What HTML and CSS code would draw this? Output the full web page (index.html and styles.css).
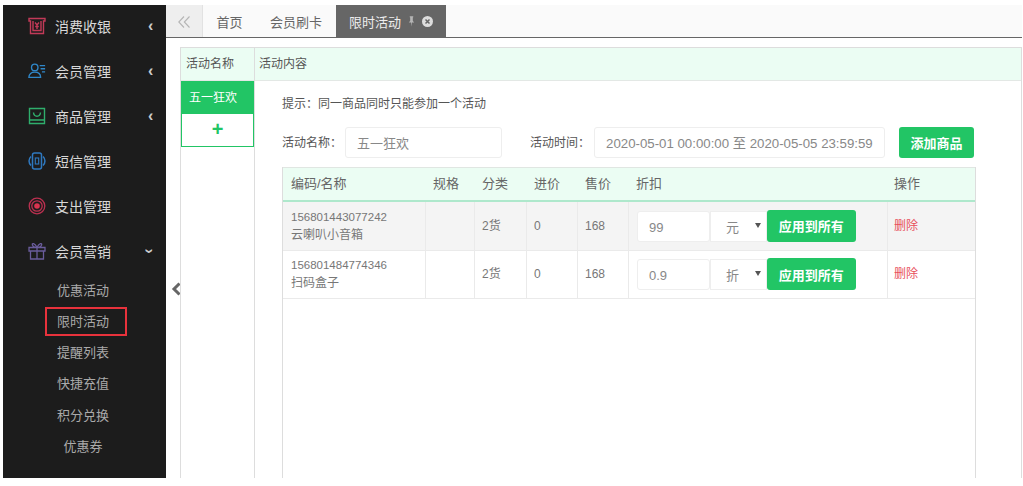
FILE: index.html
```html
<!DOCTYPE html>
<html lang="en">
<head>
  <meta charset="UTF-8" />
  <title>限时活动</title>
  <link rel="stylesheet" href="styles.css">
</head>
<body>
  <div class="app">
    <aside class="sidebar">
      <ul class="menu">
        <li class="menu-item">
          <svg class="icon" viewBox="0 0 18 18" fill="none" stroke="#c23a58" stroke-width="1.4"><path d="M1 1.500h16v2.500h-1.500v12.500h-13V4H1z"/><path d="M5 4v9.500h8V4"/><path d="M7 5.500l2 2.500 2-2.500M9 8v4M7.200 9.500h3.600"/></svg>
          <span class="menu-label">消费收银</span>
          <span class="caret">‹</span>
        </li>
        <li class="menu-item">
          <svg class="icon" viewBox="0 0 20 18" fill="none" stroke="#2f87c9" stroke-width="1.500"><circle cx="7.500" cy="5" r="3.600"/><path d="M1 16c0-3.800 2.800-5.800 6.500-5.800S14 12.200 14 16zM13 3h6M14 6.500h5M15.500 10h3.500"/></svg>
          <span class="menu-label">会员管理</span>
          <span class="caret">‹</span>
        </li>
        <li class="menu-item">
          <svg class="icon" viewBox="0 0 18 18" fill="none" stroke="#2fae6c" stroke-width="1.400"><path d="M1.500 1.500h15v15h-15zM1.500 13h15M5.500 5.500c.5 5 6.500 5 7 0"/></svg>
          <span class="menu-label">商品管理</span>
          <span class="caret">‹</span>
        </li>
        <li class="menu-item">
          <svg class="icon" viewBox="0 0 18 18" fill="none" stroke="#2f79c0" stroke-width="1.500"><rect x="4.500" y="1" width="9" height="16" rx="2"/><rect x="7.300" y="6" width="3.400" height="6" stroke-width="1.100"/><path d="M3 4.500c-2.600 2.500-2.600 6.500 0 9M15 4.500c2.600 2.500 2.600 6.500 0 9"/></svg>
          <span class="menu-label">短信管理</span>
        </li>
        <li class="menu-item">
          <svg class="icon" viewBox="0 0 18 18" fill="none" stroke="#bb3050" stroke-width="1.300"><circle cx="9" cy="9" r="7.800"/><circle cx="9" cy="9" r="5.200"/><circle cx="9" cy="9" r="2.800" fill="#d8344f" stroke="none"/></svg>
          <span class="menu-label">支出管理</span>
        </li>
        <li class="menu-item">
          <svg class="icon" viewBox="0 0 18 18" fill="none" stroke="#6a5c9c" stroke-width="1.300"><path d="M1 5.500h16v3.500H1zM2.500 9v8h13V9M9 5.500V17M9 5.500C7 1 3.500 .5 4.500 3.200 5 5 7 5.500 9 5.500c2 0 4-.5 4.500-2.300C14.500 .5 11 1 9 5.500z"/></svg>
          <span class="menu-label">会员营销</span>
          <span class="caret caret-open">‹</span>
        </li>
      </ul>
      <ul class="submenu">
        <li>优惠活动</li>
        <li class="is-marked">限时活动</li>
        <li>提醒列表</li>
        <li>快捷充值</li>
        <li>积分兑换</li>
        <li>优惠券</li>
      </ul>
    </aside>

    <div class="collapse-strip">
      <svg class="collapse-arrow" viewBox="0 0 10 14" fill="none" stroke="#666" stroke-width="3"><path d="M8.500 1.500L3 7l5.500 5.500"/></svg>
    </div>

    <main class="main">
      <nav class="tabs">
        <span class="tab-back">
          <svg class="back-icon" viewBox="0 0 12 12" fill="none" stroke="#b5b5b5" stroke-width="1.100"><path d="M6 .5L.8 6 6 11.500M11.500 .5L6.300 6l5.200 5.500"/></svg>
        </span>
        <span class="tab">首页</span>
        <span class="tab">会员刷卡</span>
        <span class="tab tab-active">限时活动
          <svg class="pin" viewBox="0 0 8 12" fill="#b5b5b5"><path d="M2 0h4v1l-.5.500V5L7 7H4.500L4 12l-.5-5H1l1.500-2V1.500L2 1z"/></svg>
          <svg class="tab-close" viewBox="0 0 11 11"><circle cx="5.500" cy="5.500" r="5.500" fill="#ddd"/><path d="M3.500 3.500l4 4M7.500 3.500l-4 4" stroke="#666" stroke-width="1.500"/></svg>
        </span>
      </nav>

      <div class="panel">
        <div class="activity-col">
          <div class="col-head">活动名称</div>
          <div class="activity-current">五一狂欢</div>
          <div class="activity-add">+</div>
        </div>
        <div class="content-col">
          <div class="col-head">活动内容</div>
          <div class="content-body">
            <p class="hint">提示：同一商品同时只能参加一个活动</p>
            <div class="form-row">
              <label class="form-label">活动名称：</label>
              <div class="input input-name">五一狂欢</div>
              <label class="form-label form-label-time">活动时间：</label>
              <div class="input input-time">2020-05-01 00:00:00 至 2020-05-05 23:59:59</div>
              <button class="btn btn-add">添加商品</button>
            </div>
            <div class="goods-wrap">
              <table class="goods">
                <thead>
                  <tr>
                    <th class="c-code">编码/名称</th>
                    <th class="c-spec">规格</th>
                    <th class="c-type">分类</th>
                    <th class="c-cost">进价</th>
                    <th class="c-price">售价</th>
                    <th class="c-discount">折扣</th>
                    <th>操作</th>
                  </tr>
                </thead>
                <tbody>
                  <tr class="row-grey">
                    <td><span class="code">156801443077242</span><br>云喇叭小音箱</td>
                    <td></td>
                    <td>2货</td>
                    <td>0</td>
                    <td>168</td>
                    <td class="discount-cell">
                      <div class="discount">
                        <div class="input input-num">99</div>
                        <div class="input input-unit">元<span class="arrow"></span></div>
                        <button class="btn btn-apply">应用到所有</button>
                      </div>
                    </td>
                    <td class="del">删除</td>
                  </tr>
                  <tr>
                    <td><span class="code">156801484774346</span><br>扫码盒子</td>
                    <td></td>
                    <td>2货</td>
                    <td>0</td>
                    <td>168</td>
                    <td class="discount-cell">
                      <div class="discount">
                        <div class="input input-num">0.9</div>
                        <div class="input input-unit">折<span class="arrow"></span></div>
                        <button class="btn btn-apply">应用到所有</button>
                      </div>
                    </td>
                    <td class="del">删除</td>
                  </tr>
                </tbody>
              </table>
            </div>
          </div>
        </div>
      </div>
    </main>
  </div>
</body>
</html>
```

FILE: styles.css
```css
* {
  box-sizing: border-box;
}

html, body {
  margin: 0;
  height: 100%;
  overflow: hidden;
  background-color: #fff;
}

body {
  padding: 5px 1px 8px 3px;
  font-family: "Liberation Sans", "Noto Sans CJK SC", sans-serif;
  font-size: 12px;
  color: #666;
}

.app {
  display: flex;
  height: 100%;
}

/* sidebar */
.sidebar {
  width: 163px;
  flex: none;
  background-color: #1c1c1c;
  color: #ccc;
}

.menu, .submenu {
  list-style: none;
  margin: 0;
  padding: 0;
}

.menu-item {
  display: flex;
  align-items: center;
  height: 45px;
  padding: 0 0 4px 25px;
  font-size: 14px;
}

.icon {
  width: 18px;
  height: 18px;
  flex: none;
}

.menu-label {
  margin-left: 9px;
  width: 93px;
  color: #d8d8d8;
}

.caret {
  font-size: 16px;
  line-height: 1;
  color: #ccc;
  font-weight: bold;
}

.caret-open {
  margin-left: -3px;
  transform: rotate(-90deg);
}

.submenu li {
  height: 31.2px;
  line-height: 31px;
  width: 160px;
  text-align: center;
  font-size: 13px;
  color: #aaa;
}

.submenu li.is-marked {
  width: 82px;
  height: 29px;
  line-height: 25px;
  margin: 1px 0 1px 42px;
  padding-left: 10px;
  border: 2px solid #e8323c;
  text-align: left;
}

/* the thin strip with the collapse arrow */
.collapse-strip {
  width: 14px;
  flex: none;
  display: flex;
  align-items: center;
  justify-content: center;
  padding: 94px 0 0 6px;
}

.collapse-arrow {
  width: 10px;
  height: 14px;
  flex: none;
}

.main {
  flex: 1;
  margin-left: -14px;
  display: flex;
  flex-direction: column;
  min-width: 0;
}

/* tabs */
.tabs {
  display: flex;
  height: 33px;
  flex: none;
  background-color: #fafafa;
  border-bottom: 1px solid #666;
  align-items: stretch;
  font-size: 13px;
  margin-bottom: 9px;
}

.tab-back {
  width: 37px;
  display: flex;
  align-items: center;
  justify-content: center;
  background-color: #eee;
  border-right: 1px solid #e2e2e2;
}

.back-icon {
  width: 12px;
  height: 12px;
  margin-top: 2px;
}

.tab {
  display: flex;
  align-items: center;
  padding: 0 14px 0 13.5px;
  color: #666;
}

.tab-active {
  background-color: #666;
  color: #eee;
  padding: 0 13px;
  gap: 7px;
}

.pin {
  width: 7px;
  height: 11px;
}

.tab-close {
  width: 11px;
  height: 11px;
}

/* panel */
.panel {
  flex: 1;
  display: flex;
  margin-left: 14px;
  border: 1px solid #ddd;
  border-bottom: 0;
  min-height: 0;
}

.col-head {
  height: 33px;
  line-height: 33px;
  padding-left: 5px;
  background-color: #ebfdf3;
  border-bottom: 1px solid #e3e8e5;
  color: #555;
  font-size: 12px;
}

.activity-col {
  width: 74px;
  flex: none;
  border-right: 1px solid #ddd;
}

.activity-current {
  height: 33px;
  line-height: 34px;
  padding-left: 8px;
  background-color: #22c565;
  color: #fff;
  font-size: 12px;
}

.activity-add {
  height: 33px;
  line-height: 30px;
  border: 1px solid #22c565;
  border-top: 0;
  color: #22c565;
  text-align: center;
  font-size: 20px;
  font-weight: bold;
}

.content-col {
  flex: 1;
  min-width: 0;
  display: flex;
  flex-direction: column;
}

.content-col .col-head {
  padding-left: 4px;
}

.content-body {
  flex: 1;
  display: flex;
  flex-direction: column;
  padding: 0 46px 0 27px;
}

.hint {
  margin: 0;
  height: 46px;
  line-height: 47px;
  flex: none;
  color: #555;
}

.form-row {
  display: flex;
  align-items: center;
  flex: none;
  height: 31px;
  margin-bottom: 9px;
}

.form-label {
  margin-bottom: 3px;
  color: #555;
  white-space: nowrap;
}

.form-label-time {
  margin-left: 28px;
  margin-right: 4px;
}

.input {
  height: 31px;
  line-height: 31px;
  background-color: #fff;
  border: 1px solid #eee;
  border-radius: 3px;
  color: #888;
  font-size: 13px;
}

.input-name {
  width: 157px;
  margin-left: 3px;
  padding-left: 11px;
}

.input-time {
  width: 291px;
  padding-left: 11px;
  white-space: nowrap;
  font-size: 13.25px;
}

.btn {
  border: 0;
  background-color: #22c565;
  color: #fff;
  border-radius: 3px;
  font-family: inherit;
  font-size: 13px;
  font-weight: bold;
  padding: 0;
}

.btn-add {
  width: 75px;
  height: 31px;
  margin-left: 14px;
}

/* goods table */
.goods-wrap {
  flex: 1;
  width: 694px;
  border-left: 1px solid #ddd;
  border-right: 1px solid #ddd;
}

.goods {
  width: 100%;
  border-collapse: separate;
  border-spacing: 0;
  table-layout: fixed;
}

.goods th {
  height: 35px;
  background-color: #ebfdf3;
  border-top: 1px solid #e0e6e2;
  border-bottom: 2px solid #aee8cc;
  padding: 0 7px 3px;
  text-align: left;
  font-size: 13px;
  font-weight: normal;
  color: #666;
}

.goods td {
  height: 48.5px;
  padding: 0 7px;
  border-right: 1px solid #eaeaea;
  border-bottom: 1px solid #eaeaea;
  line-height: 18px;
  color: #777;
}

.goods th:first-child,
.goods td:first-child {
  padding-left: 8px;
}

.goods th:last-child,
.goods td:last-child {
  padding-left: 6px;
  border-right: 0;
}

.code {
  font-size: 11.5px;
}

.c-code { width: 143px; }
.c-spec { width: 49px; }
.c-type { width: 52px; }
.c-cost { width: 51px; }
.c-price { width: 51px; }
.c-discount { width: 259px; }

.row-grey td {
  background-color: #f4f4f4;
}

.goods td.discount-cell {
  padding-left: 8px;
}

.discount {
  display: flex;
  align-items: flex-start;
}

.input-num {
  width: 73px;
  margin-top: 1px;
  padding-left: 11px;
}

.input-unit {
  position: relative;
  width: 57px;
  margin-top: 1px;
  padding-left: 15px;
  border-radius: 0;
}

.arrow {
  position: absolute;
  right: 5px;
  top: 11px;
  border: 3px solid transparent;
  border-top: 5px solid #555;
}

.btn-apply {
  width: 88.5px;
  height: 32px;
}

.goods td.del {
  color: #e8505b;
}
```
